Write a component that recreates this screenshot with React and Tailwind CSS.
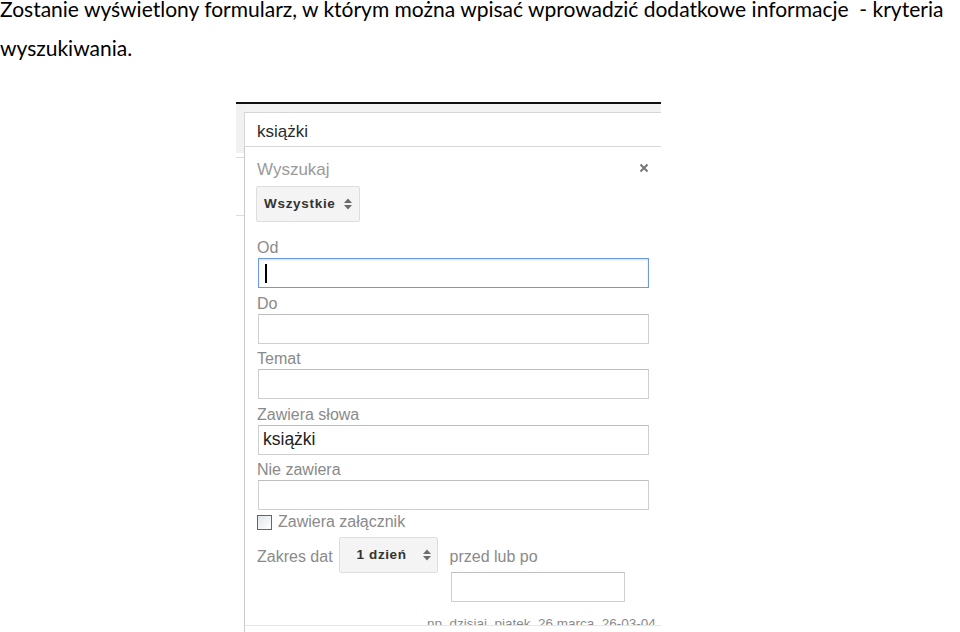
import React from "react";

const UI = { fontFamily: '"Liberation Sans", Arial, sans-serif' };

function Arrows({ className }) {
  return (
    <svg width="8" height="12" viewBox="0 0 8 12" className={className}>
      <polygon points="0,5 4,0.5 8,5" fill="#6b6b6b" />
      <polygon points="0,7 4,11.5 8,7" fill="#6b6b6b" />
    </svg>
  );
}

function Field({ label, children, first }) {
  return (
    <div className={first ? "" : "mt-[6.5px]"}>
      <div className="h-[19px] leading-[18px] text-[16px] text-[#8a8a8a]">{label}</div>
      {children}
    </div>
  );
}

function Input({ focused, value }) {
  return (
    <div
      className={
        "h-[30px] w-[391px] ml-[1px] bg-white flex items-center " +
        (focused
          ? "border border-[#6d9be0] shadow-[inset_0_1px_2px_rgba(0,0,0,0.15)]"
          : "border border-[#cfcfcf] border-t-[#bdbdbd]")
      }
    >
      {focused && <div className="ml-[6px] w-[1.5px] h-[19px] bg-black" />}
      {value && (
        <span className="ml-[4px] text-[17.5px] text-[#222] leading-none">{value}</span>
      )}
    </div>
  );
}

export default function App() {
  return (
    <div className="bg-white w-[960px] h-[632px] overflow-hidden relative">
      <div
        className="text-black text-[21px] whitespace-pre"
        style={{ fontFamily: 'Lato, "Open Sans", sans-serif' }}
      >
        <div className="leading-[17px]">
          Zostanie wyświetlony formularz, w którym można wpisać wprowadzić dodatkowe informacje  - kryteria
        </div>
        <div className="leading-[17px] mt-[22px]">wyszukiwania.</div>
      </div>

      <div className="mt-[46px] ml-[236px] w-[425px]" style={UI}>
        <div className="h-[2px] bg-[#111]" />
        <div className="flex">
          {/* left strip of underlying page */}
          <div className="w-[8px] shrink-0 flex flex-col">
            <div className="h-[49px] bg-[#f1f1f1]" />
            <div className="h-[4px]" />
            <div className="h-[1px] bg-[#dcdcdc]" />
            <div className="h-[57px]" />
            <div className="h-[1px] bg-[#dcdcdc]" />
          </div>
          <div className="flex-1 min-w-0 flex flex-col overflow-hidden">
            <div className="h-[8px] bg-[#f3f3f3]" />
            <div className="h-[35px] border-t border-l border-b border-[#d6d6d6] bg-white flex items-center pl-[12px]">
              <span className="text-[17px] text-[#2a2a2a] leading-none mt-[3px]">książki</span>
            </div>
            <div className="border-l border-[#c9c9c9] h-[485px] overflow-hidden">
              <div className="h-[479px] overflow-hidden border-b border-[#e6e6e6] pl-[12px] pt-[12px]">
                <div className="flex items-start justify-between pr-[12px]">
                  <div className="leading-[20px] text-[17px] text-[#9a9a9a] mt-[1px]">Wyszukaj</div>
                  <svg width="10" height="10" viewBox="0 0 10 10" className="mt-[4px]">
                    <path d="M1.5 1.5 L8.5 8.5 M8.5 1.5 L1.5 8.5" stroke="#777" strokeWidth="2" />
                  </svg>
                </div>
                <div className="mt-[6px] ml-[-1px] h-[36px] w-[104px] bg-[#f4f4f4] border border-[#dedede] rounded-[2px] flex items-center justify-between pl-[7px] pr-[7px]">
                  <span className="text-[13.5px] font-bold text-[#333] tracking-[0.7px]">Wszystkie</span>
                  <Arrows />
                </div>
                <div className="mt-[17px]">
                  <Field label="Od" first>
                    <Input focused />
                  </Field>
                  <Field label="Do">
                    <Input />
                  </Field>
                  <Field label="Temat">
                    <Input />
                  </Field>
                  <Field label="Zawiera słowa">
                    <Input value="książki" />
                  </Field>
                  <Field label="Nie zawiera">
                    <Input />
                  </Field>
                </div>
                <div className="mt-[4px] flex items-center h-[16px]">
                  <div className="w-[15px] h-[15px] border border-[#56687a] bg-gradient-to-br from-[#e2e6ea] to-white" />
                  <span className="ml-[6px] text-[16px] text-[#8a8a8a] leading-none">Zawiera załącznik</span>
                </div>
                <div className="mt-[7px] flex items-center">
                  <span className="text-[16px] text-[#8a8a8a] leading-none mt-[3px]">Zakres dat</span>
                  <div className="ml-[6px] h-[36px] w-[99px] bg-[#f4f4f4] border border-[#dedede] rounded-[2px] flex items-center justify-between pl-[17px] pr-[6px]">
                    <span className="text-[13.5px] font-bold text-[#333] tracking-[0.6px]">1 dzień</span>
                    <Arrows />
                  </div>
                  <span className="ml-[12px] text-[16px] text-[#8a8a8a] leading-none mt-[3px]">przed lub po</span>
                </div>
                <div className="ml-[194px] mt-[-1px] h-[30px] w-[174px] border border-[#cfcfcf] border-t-[#bdbdbd] bg-white" />
                <div className="ml-[170px] mt-[13px] text-[13.5px] text-[#8a8a8a] leading-[18px] whitespace-nowrap">
                  np. dzisiaj, piątek, 26 marca, 26-03-04
                </div>
              </div>
            </div>
          </div>
        </div>
      </div>
    </div>
  );
}
